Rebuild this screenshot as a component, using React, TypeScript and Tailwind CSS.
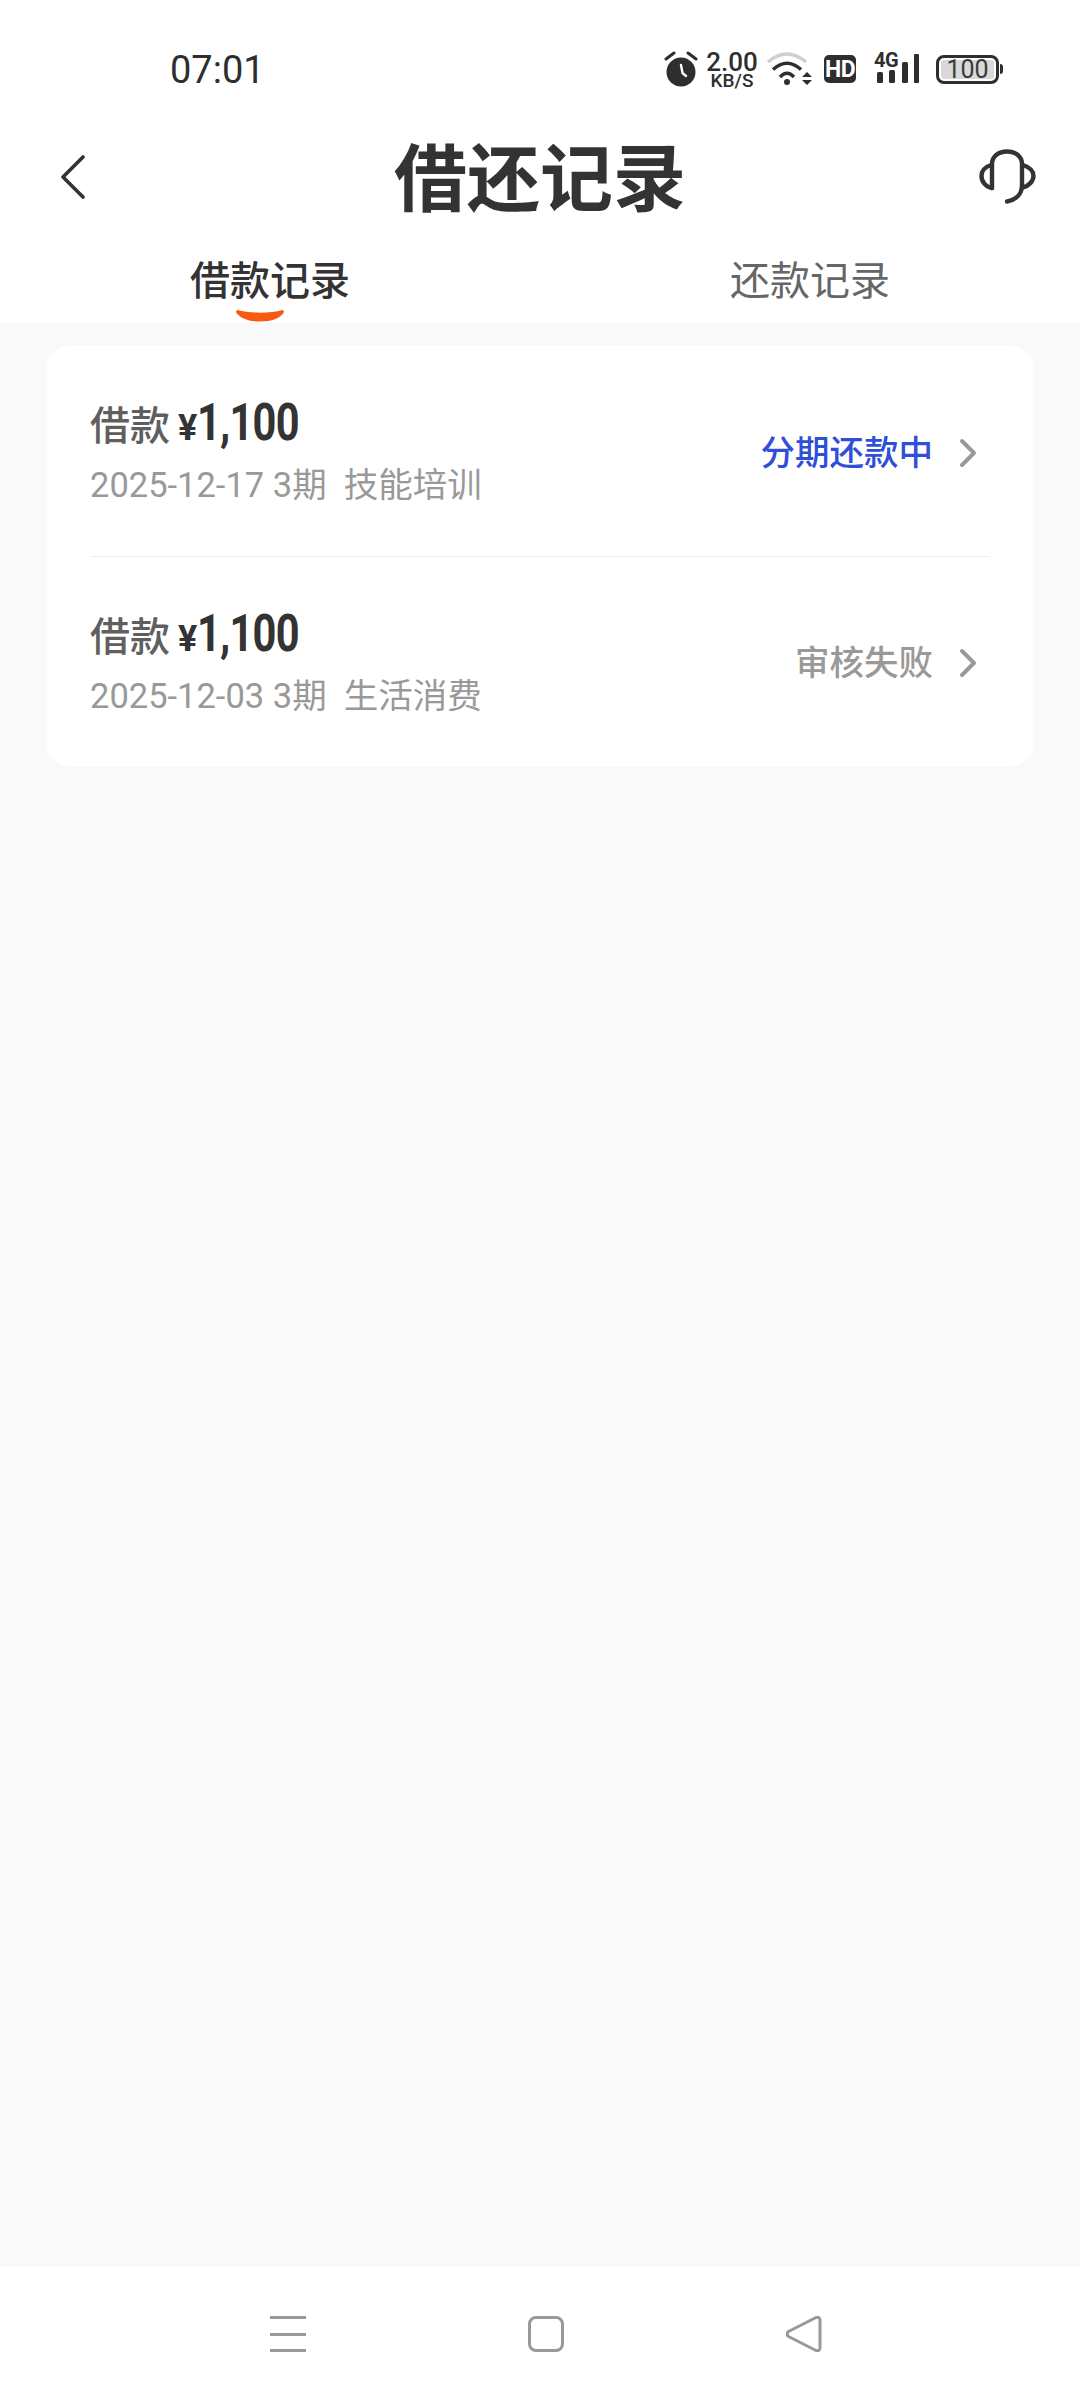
const FONT = "font-['Roboto','Noto_Sans_CJK_SC',sans-serif]";

function AlarmIcon() {
  return (
    <svg width="34" height="38" viewBox="0 0 34 38" fill="none">
      <circle cx="17" cy="22" r="14.5" fill="#2e2e2e" />
      <path d="M2 9L10 3M24 3L32 9" stroke="#2e2e2e" strokeWidth="3" strokeLinecap="round" />
      <path d="M17 15L18.5 23L22 26" stroke="#fff" strokeWidth="2.4" strokeLinecap="round" strokeLinejoin="round" />
    </svg>
  );
}

function WifiIcon() {
  return (
    <svg width="46" height="34" viewBox="0 0 46 34" fill="none">
      <path d="M1 10Q20 -6 39 10" stroke="#cfcfcf" strokeWidth="3.4" />
      <path d="M6 17.5Q20 5 34 17.5" stroke="#2e2e2e" strokeWidth="3.4" />
      <path d="M13 25Q20 17.5 27 25" stroke="#2e2e2e" strokeWidth="3.4" />
      <circle cx="20" cy="30" r="3" fill="#2e2e2e" />
      <path d="M40 20L35 25H45ZM35 28H45L40 33Z" fill="#2e2e2e" />
    </svg>
  );
}

function SignalIcon() {
  return (
    <div className="relative w-[46px] h-[31px]">
      <svg width="46" height="31" viewBox="0 0 46 31" className="block">
        <rect x="3" y="18" width="6" height="11" rx="1.5" fill="#2e2e2e" />
        <rect x="15" y="16" width="6" height="13" rx="1.5" fill="#2e2e2e" />
        <rect x="28" y="8" width="6" height="21" rx="1.5" fill="#2e2e2e" />
        <rect x="40" y="0" width="5" height="29" rx="1" fill="#2e2e2e" />
      </svg>
      <span className="absolute left-0 top-[-4px] text-[20px] leading-[20px] font-bold text-[#2e2e2e] tracking-[-0.5px]">4G</span>
    </div>
  );
}

function Battery() {
  return (
    <div className="flex items-center">
      <div className="w-[63px] h-[29px] rounded-[8px] border-[3px] border-[#2e2e2e] p-[2px]">
        <div className="h-full rounded-[3px] bg-[#d9d9d9] flex items-center justify-center text-[25px] leading-none text-[#3a3a3a]">100</div>
      </div>
      <div className="w-[3px] h-[10px] ml-[1px] rounded-r-sm bg-[#2e2e2e]" />
    </div>
  );
}

function StatusBar() {
  return (
    <div className="h-[110px] shrink-0 flex items-center pl-[170px] pr-[77px] pt-[28px] text-[#2e2e2e]">
      <span className="text-[38px] leading-none pt-[2px]">07:01</span>
      <div className="ml-auto flex items-center">
        <AlarmIcon />
        <div className="ml-[8px] w-[52px] flex flex-col items-center">
          <span className="text-[26px] leading-[22px] font-medium">2.00</span>
          <span className="text-[19px] leading-[15px] font-medium">KB/S</span>
        </div>
        <div className="ml-[9px]">
          <WifiIcon />
        </div>
        <div className="ml-[11px] w-[32px] h-[28px] rounded-[5px] bg-[#2e2e2e] flex items-center justify-center text-[23px] leading-none font-bold text-white tracking-[-0.5px]">HD</div>
        <div className="ml-[18px]">
          <SignalIcon />
        </div>
        <div className="ml-[16px]">
          <Battery />
        </div>
      </div>
    </div>
  );
}

function BackIcon() {
  return (
    <svg width="26" height="44" viewBox="0 0 26 44" fill="none" stroke="#333" strokeWidth="3.6" strokeLinecap="round" strokeLinejoin="round" className="ml-[16px] mb-[6px]">
      <path d="M23 2L3 22L23 42" />
    </svg>
  );
}

function HeadsetIcon() {
  return (
    <svg width="57" height="56" viewBox="0 0 57 56" fill="none" stroke="#333" strokeWidth="4.4" strokeLinecap="round" strokeLinejoin="round" className="mb-[6px]">
      <path d="M13 39V15C13 7 20 2.5 28 2.5C36 2.5 43 7 43 15V36C43 45 37 51 28 52.5" />
      <path d="M12 16C6 18 2.5 22 2.5 27C2.5 33 7 38 13 39" />
      <path d="M44 16C50 18 54.5 22 54.5 27C54.5 32 50 37 43 39" />
    </svg>
  );
}

function Header() {
  return (
    <div className="h-[120px] pt-[20px] shrink-0 grid grid-cols-[1fr_auto_1fr] items-center px-[44px]">
      <BackIcon />
      <h1 className="text-[73px] leading-none font-bold text-[#333]">借还记录</h1>
      <div className="flex justify-end">
        <HeadsetIcon />
      </div>
    </div>
  );
}

function Tabs() {
  return (
    <div className="h-[93px] shrink-0 flex bg-white">
      <div className="relative flex-1 flex justify-center pt-[29px] text-[40px] leading-[46px] font-medium text-[#333]">
        借款记录
        <svg width="48" height="13" viewBox="0 0 48 13" className="absolute left-[236px] bottom-[1px]">
          <path d="M1.5 1C14 4.5 34 4.5 46.5 1C48 1 48 3 47.5 4C44 9 36 12.5 24 12.5C12 12.5 4 9 0.5 4C0 3 0 1 1.5 1Z" fill="#f95a11" />
        </svg>
      </div>
      <div className="flex-1 flex justify-center pt-[29px] text-[40px] leading-[46px] text-[#666]">还款记录</div>
    </div>
  );
}

function RowChevron() {
  return (
    <svg width="20" height="30" viewBox="0 0 20 30" fill="none" stroke="#999" strokeWidth="4" strokeLinecap="round" strokeLinejoin="round" className="ml-[25px] mr-[12px]">
      <path d="M4 3L16 15L4 27" />
    </svg>
  );
}

interface LoanRowProps {
  date: string;
  purpose: string;
  status: string;
  statusClass: string;
  rowClass: string;
}

function LoanRow({ date, purpose, status, statusClass, rowClass }: LoanRowProps) {
  return (
    <div className={`mx-[44px] flex items-center ${rowClass}`}>
      <div className="flex flex-col pb-[10px]">
        <div className="flex items-baseline h-[62px] text-[#333]">
          <span className="text-[40px] font-medium text-[#5f5f5f]">借款</span>
          <span className="ml-[8px] text-[36px] font-bold">¥</span>
          <span className="inline-block origin-left scale-x-[0.8] text-[52px] font-bold tracking-[-1px]">1,100</span>
        </div>
        <div className="mt-[17px] text-[34.5px] leading-[44px] text-[#999] whitespace-pre">
          {date} 3期  {purpose}
        </div>
      </div>
      <div className="ml-auto flex items-center pt-[4px]">
        <span className={`text-[34.5px] leading-[44px] font-medium ${statusClass}`}>{status}</span>
        <RowChevron />
      </div>
    </div>
  );
}

function NavBar() {
  return (
    <div className="h-[133px] shrink-0 bg-white flex items-start pt-[49px] pl-[270px]">
      <div className="w-[36px] h-[36px] flex flex-col justify-between">
        <div className="h-[3px] bg-[#999]" />
        <div className="h-[3px] bg-[#999]" />
        <div className="h-[3px] bg-[#999]" />
      </div>
      <div className="ml-[222px] w-[36px] h-[36px] rounded-[8px] border-[3px] border-[#999]" />
      <svg width="36" height="36" viewBox="0 0 36 36" fill="none" className="ml-[222px]">
        <path d="M2.5 15.5L30 1.5C32.5 0.8 34 2 34 4V32C34 34 32.5 35.2 30 34.5L2.5 20.5C0.6 19 0.6 17 2.5 15.5Z" stroke="#999" strokeWidth="3" strokeLinejoin="round" />
      </svg>
    </div>
  );
}

export default function App() {
  return (
    <div className={`w-[1080px] h-[2400px] flex flex-col bg-white ${FONT}`}>
      <StatusBar />
      <Header />
      <Tabs />
      <div className="flex-1 bg-[#f9f9f9] pt-[22px] px-[46px]">
        <div className="bg-white rounded-[26px]">
          <LoanRow date="2025-12-17" purpose="技能培训" status="分期还款中" statusClass="text-[#2f4fd8]" rowClass="h-[212px] border-b border-[#eeeeee]" />
          <LoanRow date="2025-12-03" purpose="生活消费" status="审核失败" statusClass="text-[#999]" rowClass="h-[210px] pb-[2px]" />
        </div>
      </div>
      <NavBar />
    </div>
  );
}
